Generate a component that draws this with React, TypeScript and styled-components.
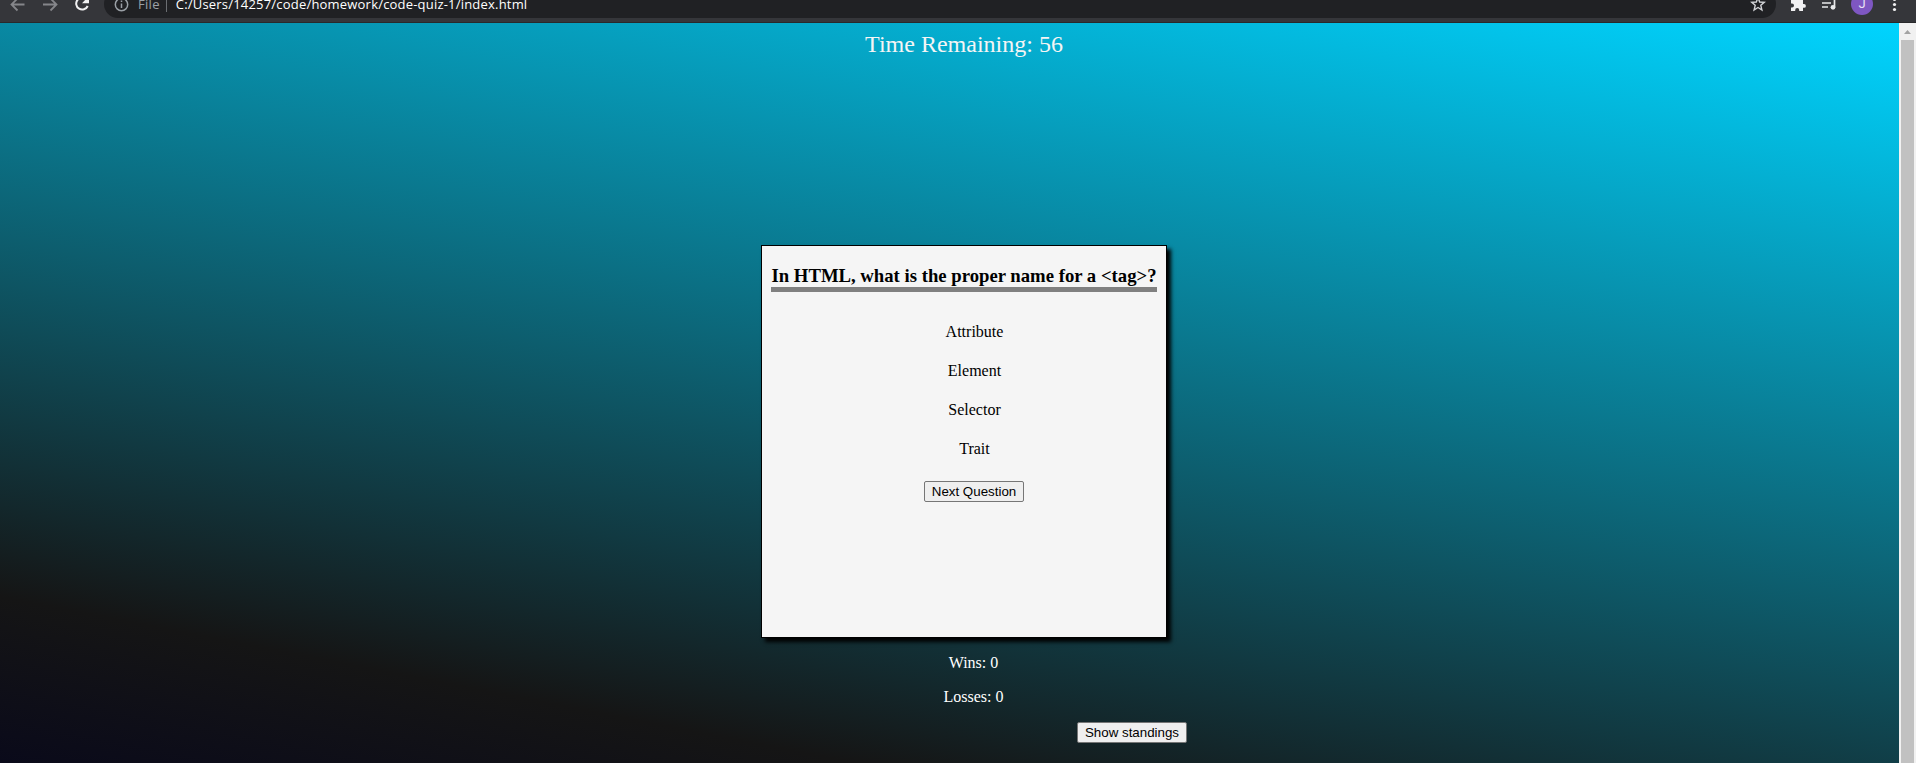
import React from "react";
import styled, { createGlobalStyle } from "styled-components";

const GlobalStyle = createGlobalStyle`
  html, body { margin: 0; padding: 0; }
  body { overflow: hidden; font-family: "Liberation Serif", "Times New Roman", serif; font-size: 16px; }
`;

const Window = styled.div`
  display: flex;
  flex-direction: column;
  height: 763px;
  overflow: hidden;
`;

const Toolbar = styled.header`
  display: flex;
  align-items: flex-end;
  height: 22px;
  flex: none;
  background: #35363a;
  border-bottom: 1px solid #29292b;
  overflow: hidden;
`;

const ToolbarIcon = styled.svg<{ $gap?: number }>`
  display: block;
  flex: none;
  margin-left: ${(p) => p.$gap ?? 0}px;
`;

const AddressBar = styled.div`
  display: flex;
  align-items: center;
  box-sizing: border-box;
  width: 1672px;
  height: 28px;
  flex: none;
  margin: 0 0 4px 13px;
  padding: 0 10px 0 9px;
  border-radius: 14px;
  background: #202124;
  font-family: "Open Sans", "Noto Sans", sans-serif;
  font-size: 13px;
  line-height: 18px;
  white-space: nowrap;
`;

const Scheme = styled.span`
  margin-left: 9px;
  color: #9aa0a6;
  letter-spacing: 0.3px;
`;

const Divider = styled.span`
  width: 1px;
  height: 16px;
  margin: 0 9px 0 6px;
  background: #6b6e72;
`;

const Url = styled.span`
  flex: 1;
  color: #fff;
  letter-spacing: 0.2px;
`;

const Avatar = styled.div`
  display: flex;
  justify-content: center;
  flex: none;
  width: 22px;
  height: 22px;
  margin: 0 0 7px 13px;
  border-radius: 50%;
  background: #7e57c2;
  color: #e9e2f5;
  font: 13px/21px Roboto, sans-serif;
`;

const Viewport = styled.div`
  display: flex;
  flex: 1;
  min-height: 0;
`;

const Page = styled.main`
  display: flex;
  flex-direction: column;
  align-items: center;
  box-sizing: border-box;
  width: 1899px;
  padding-left: 29px;
  background: linear-gradient(11deg, #0a0a1a 0%, #151515 15%, #00d4ff 100%);
`;

const Timer = styled.div`
  margin-top: 8px;
  color: whitesmoke;
  font-size: 24px;
  line-height: 27px;
`;

const Card = styled.section`
  display: flex;
  flex-direction: column;
  align-items: center;
  box-sizing: border-box;
  width: 406px;
  height: 393px;
  margin-top: 187px;
  padding: 0 9px;
  border: 1px solid #000;
  background: whitesmoke;
  box-shadow: 4px 4px 4px #000;
`;

const Question = styled.h3`
  align-self: stretch;
  margin: 19px 0 0;
  padding-bottom: 1px;
  border-bottom: 5px solid gray;
  font-size: 18.72px;
  line-height: 21px;
  text-align: center;
  white-space: nowrap;
`;

const Choices = styled.ul`
  margin: 31px 0 0;
  padding: 0 0 0 21px;
  list-style: none;
  text-align: center;
`;

const Choice = styled.li`
  height: 39px;
  line-height: 18px;
`;

const Button = styled.button`
  box-sizing: border-box;
  height: 21px;
  padding: 0;
  border: 1px solid #767676;
  border-radius: 2px;
  background: #efefef;
  color: #000;
  font: 13.333px/15px "Liberation Sans", Arial, sans-serif;
  white-space: nowrap;
`;

const NextButton = styled(Button)`
  width: 100px;
  margin: 2px 0 0 20px;
`;

const StandingsButton = styled(Button)`
  width: 110px;
  margin: 16px 0 0 336px;
`;

const Score = styled.p`
  margin: 16px 0 0 19px;
  color: #fff;
  line-height: 18px;
`;

const Scrollbar = styled.div`
  display: flex;
  flex-direction: column;
  align-items: center;
  width: 17px;
  background: #f1f1f1;
`;

const Thumb = styled.div`
  flex: 1;
  width: 13px;
  background: #c1c1c1;
`;

const answers = ["Attribute", "Element", "Selector", "Trait"];

export default function App() {
  return (
    <Window>
      <GlobalStyle />
      <Toolbar>
        <ToolbarIcon width="91" height="22" viewBox="0 0 91 22" fill="none">
          <path d="M24.500 4.500H12M17.500 -1.500L11.500 4.500L17.500 10.500" stroke="#85868a" strokeWidth="1.800" />
          <path d="M43 4.500H56M50.500 -1.500L56.500 4.500L50.500 10.500" stroke="#85868a" strokeWidth="1.800" />
          <path d="M86.600 -0.500A6 6 0 1 0 87.700 6" stroke="#f1f1f2" strokeWidth="2" />
          <path d="M82 3.200H89V-4Z" fill="#f1f1f2" />
        </ToolbarIcon>
        <AddressBar>
          <ToolbarIcon width="16" height="16" viewBox="0 0 16 16" fill="none" stroke="#9aa0a6" strokeWidth="1.500">
            <circle cx="8.500" cy="8.500" r="6.200" />
            <path d="M8.500 7.500V12M8.500 4.500V6" />
          </ToolbarIcon>
          <Scheme>File</Scheme>
          <Divider />
          <Url>C:/Users/14257/code/homework/code-quiz-1/index.html</Url>
          <ToolbarIcon width="16" height="16" viewBox="0 0 16 16" fill="none" stroke="#d3d5d8" strokeWidth="1.400">
            <path d="M8 1.700L9.700 6L14.300 6.300L10.800 9.300L11.900 14L8 11.500L4.100 14L5.200 9.300L1.700 6.300L6.300 6Z" />
          </ToolbarIcon>
        </AddressBar>
        <ToolbarIcon $gap={14} width="17" height="22" viewBox="0 0 17 22">
          <path
            d="M1 0H5V-2H9V0H13V4H14A1.900 1.900 0 0 1 14 7.800H13V11H9.200V10A2 2 0 0 0 5.200 10V11H1V7.500H2A2 2 0 0 0 2 3.500H1Z"
            fill="#f1f1f2"
          />
        </ToolbarIcon>
        <ToolbarIcon $gap={14} width="17" height="22" viewBox="0 0 17 22" fill="none">
          <path d="M1 -1H10M1 3H10M1 7H7" stroke="#e8e9ea" strokeWidth="1.700" />
          <path d="M13.500 7V-2H16" stroke="#e8e9ea" strokeWidth="1.700" />
          <circle cx="12" cy="7.300" r="2.400" fill="#e8e9ea" />
        </ToolbarIcon>
        <Avatar>J</Avatar>
        <ToolbarIcon $gap={19} width="5" height="22" viewBox="0 0 5 22" fill="#f1f1f2">
          <circle cx="2.500" cy="-0.500" r="1.600" />
          <circle cx="2.500" cy="4.500" r="1.600" />
          <circle cx="2.500" cy="9.500" r="1.600" />
        </ToolbarIcon>
      </Toolbar>
      <Viewport>
        <Page>
          <Timer>Time Remaining: 56</Timer>
          <Card>
            <Question>In HTML, what is the proper name for a &lt;tag&gt;?</Question>
            <Choices>
              {answers.map((a) => (
                <Choice key={a}>{a}</Choice>
              ))}
            </Choices>
            <NextButton>Next Question</NextButton>
          </Card>
          <Score>Wins: 0</Score>
          <Score>Losses: 0</Score>
          <StandingsButton>Show standings</StandingsButton>
        </Page>
        <Scrollbar>
          <svg width="17" height="17" viewBox="0 0 17 17">
            <path d="M5 11H12L8.500 7Z" fill="#a3a3a3" />
          </svg>
          <Thumb />
        </Scrollbar>
      </Viewport>
    </Window>
  );
}
